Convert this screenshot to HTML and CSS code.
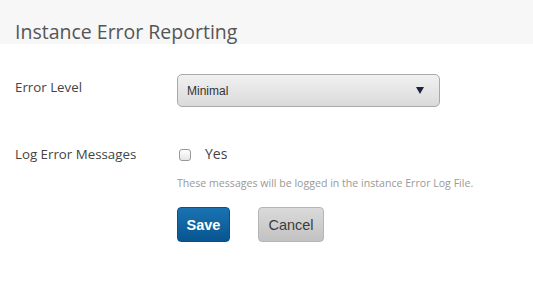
FILE: index.html
```html
<!DOCTYPE html>
<html lang="en">
<head>
    <meta charset="UTF-8">
    <title>Instance Error Reporting</title>
    <link rel="stylesheet" href="styles.css">
</head>
<body>
    <header class="page-head">
        <h1>Instance Error Reporting</h1>
    </header>

    <form class="settings">
        <div class="row row-level">
            <label class="label">Error Level</label>
            <div class="field">
                <div class="select">
                    <span>Minimal</span>
                    <span class="arrow"></span>
                </div>
            </div>
        </div>

        <div class="row row-log">
            <label class="label">Log Error Messages</label>
            <div class="field">
                <label class="check"><span class="box"></span>Yes</label>
                <p class="help">These messages will be logged in the instance Error Log File.</p>
                <div class="actions">
                    <button type="button" class="btn btn-save">Save</button>
                    <button type="button" class="btn btn-cancel">Cancel</button>
                </div>
            </div>
        </div>
    </form>
</body>
</html>
```

FILE: styles.css
```css
body {
    margin: 0;
    padding: 0;
    background: #ffffff;
    font-family: 'Open Sans', 'Noto Sans', sans-serif;
    color: #555555;
}
.page-head {
    background: #f7f7f7;
    height: 44px;
    padding: 0 15px;
}
.page-head h1 {
    margin: 0;
    padding-top: 19px;
    font-size: 19.5px;
    font-weight: normal;
    line-height: 26px;
    color: #555555;
}
.settings {
    padding: 30px 0 0 15px;
}
.row {
    display: flex;
}
.label {
    width: 162px;
    font-size: 13.3px;
    color: #444444;
}
.row-level .label {
    line-height: 27px;
}
.row-log {
    margin-top: 36px;
}
.row-log .label {
    line-height: 22px;
}
.select {
    width: 252px;
    height: 31px;
    box-sizing: content-box;
    border: 1px solid #a9a9a9;
    border-radius: 5px;
    background: linear-gradient(#f1f1f1, #dadada);
    display: flex;
    align-items: center;
    justify-content: space-between;
    padding: 0 0 0 9px;
    font-family: 'Liberation Sans', Arial, sans-serif;
    font-size: 12px;
    color: #333333;
}
.arrow {
    width: 0;
    height: 0;
    border-left: 4px solid transparent;
    border-right: 4px solid transparent;
    border-top: 7px solid #1c2540;
    margin-right: 15px;
}
.check {
    display: flex;
    align-items: center;
    font-size: 14px;
    color: #444444;
    line-height: 22px;
}
.box {
    width: 10px;
    height: 10px;
    border: 1px solid #999999;
    border-radius: 3px;
    background: linear-gradient(#ffffff, #e6e6e6);
    margin: 2px 14px 0 2px;
}
.help {
    margin: 11px 0 0 0;
    font-size: 10.6px;
    color: #999999;
}
.actions {
    display: flex;
    gap: 28px;
    margin-top: 17px;
}
.btn {
    height: 35px;
    border-radius: 4px;
    border: none;
    font-family: 'Liberation Sans', Arial, sans-serif;
    font-size: 14.5px;
    padding: 0 8px;
}
.btn-save {
    width: 53px;
    background: linear-gradient(#1b73b2, #075591);
    color: #ffffff;
    font-weight: bold;
    border: 1px solid #0a5186;
}
.btn-cancel {
    width: 66px;
    background: linear-gradient(#dadada, #c2c2c2);
    color: #3c3c3c;
    border: 1px solid #b5b5b5;
}
```
